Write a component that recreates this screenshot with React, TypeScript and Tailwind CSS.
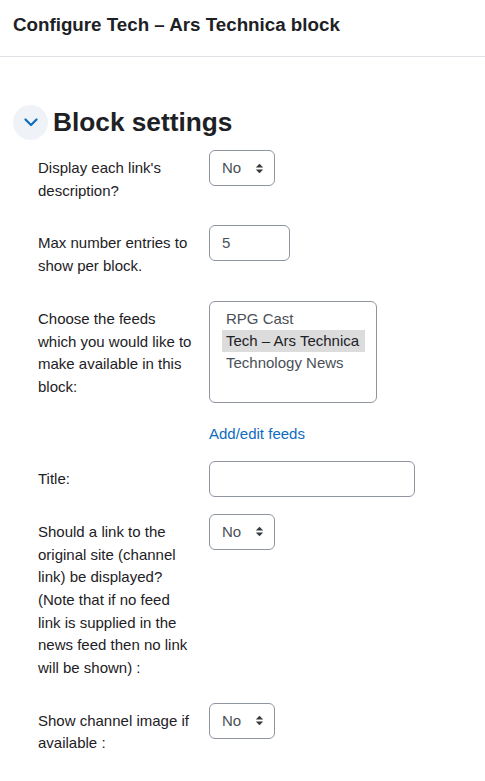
import React from "react";

function Chevrons() {
  return (
    <svg width="9" height="11" viewBox="0 0 9 11" className="shrink-0">
      <path d="M4.5 0.8 L8.2 4.4 H0.8 Z" fill="#343a40" />
      <path d="M4.5 10.2 L8.2 6.6 H0.8 Z" fill="#343a40" />
    </svg>
  );
}

function SelectNo() {
  return (
    <div className="h-[36px] w-[66px] border border-[#8f959e] rounded-[6px] flex items-center pl-[12px] pr-[10px] justify-between text-[15px] text-[#495057]">
      <span>No</span>
      <Chevrons />
    </div>
  );
}

function Row({ label, children, className = "" }: { label: React.ReactNode; children?: React.ReactNode; className?: string }) {
  return (
    <div className={"flex pl-[38px] mb-[16px] " + className}>
      <div className="w-[171px] shrink-0 pr-[15px] py-[7px] leading-[22.7px] text-[15px] text-[#1d2125]">{label}</div>
      <div className="flex-1">{children}</div>
    </div>
  );
}

export default function App() {
  return (
    <div className="w-[485px] h-[781px] bg-white overflow-hidden text-[#1d2125] font-['Liberation_Sans',Arial,sans-serif]">
      <div className="h-[57px] border-b border-[#dee2e6] pl-[13px] pt-[14px]">
        <h5 className="text-[18.75px] leading-[22.5px] font-bold">Configure Tech – Ars Technica block</h5>
      </div>
      <div className="h-[721px] border-b border-[#dee2e6]">
        <div className="flex items-center ml-[13px] mt-[48px] mb-[10px] h-[35px]">
          <div className="w-[35px] h-[35px] rounded-full bg-[#eff3f8] flex items-center justify-center">
            <svg width="14" height="9" viewBox="0 0 14 9">
              <path d="M1.5 1.5 L7 7 L12.5 1.5" fill="none" stroke="#0f6cbf" strokeWidth="2.2" strokeLinecap="round" strokeLinejoin="round" />
            </svg>
          </div>
          <h3 className="ml-[5px] text-[26.25px] leading-[31.5px] font-bold pt-[1px]">Block settings</h3>
        </div>

        <Row label={<>Display each link's description?</>}>
          <SelectNo />
        </Row>

        <Row label="Max number entries to show per block.">
          <div className="h-[36px] w-[81px] border border-[#8f959e] rounded-[6px] flex items-center pl-[12px] text-[15px] text-[#495057]">5</div>
        </Row>

        <Row label="Choose the feeds which you would like to make available in this block:">
          <div className="h-[102px] w-[168px] border border-[#8f959e] rounded-[6px] pt-[6px] text-[15px] leading-[22px] text-[#495057]">
            <div className="ml-[12px] w-[143px]">
              <div className="pl-[4px]">RPG Cast</div>
              <div className="pl-[4px] bg-[#dcdcdc] text-[#1d2125]">Tech – Ars Technica</div>
              <div className="pl-[4px]">Technology News</div>
            </div>
          </div>
        </Row>

        <div className="pl-[209px] pt-[1px] mb-[16px] text-[15px] leading-[22.5px] text-[#0f6cbf]">Add/edit feeds</div>

        <Row label="Title:">
          <div className="h-[36px] w-[206px] border border-[#8f959e] rounded-[6px]" />
        </Row>

        <Row label="Should a link to the original site (channel link) be displayed? (Note that if no feed link is supplied in the news feed then no link will be shown) :">
          <SelectNo />
        </Row>

        <Row label="Show channel image if available :">
          <SelectNo />
        </Row>
      </div>
    </div>
  );
}
